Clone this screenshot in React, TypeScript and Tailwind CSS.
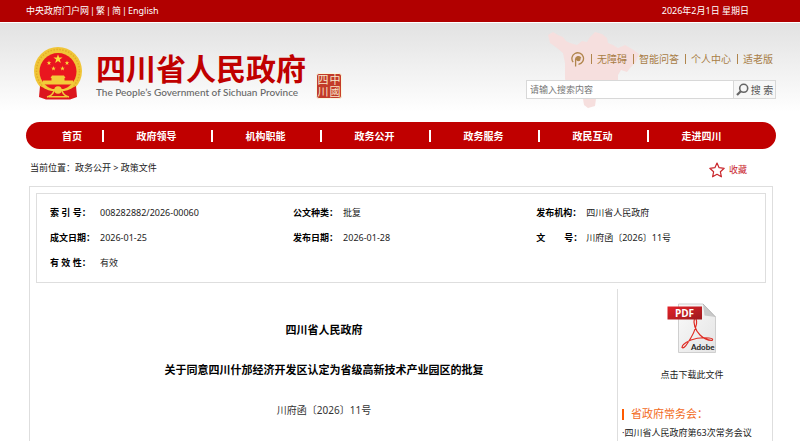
import React from "react";

const navItems = ["首页", "政府领导", "机构职能", "政务公开", "政务服务", "政民互动", "走进四川"];
const tools = ["无障碍", "智能问答", "个人中心", "适老版"];

const facts: { label: string; value: string; spread?: boolean }[] = [
  { label: "索 引 号：", value: "008282882/2026-00060" },
  { label: "公文种类：", value: "批复" },
  { label: "发布机构：", value: "四川省人民政府" },
  { label: "成文日期：", value: "2026-01-25" },
  { label: "发布日期：", value: "2026-01-28" },
  { label: "文 号：", value: "川府函〔2026〕11号", spread: true },
  { label: "有 效 性：", value: "有效" },
];

function Star({ x, y, r }: { x: number; y: number; r: number }) {
  const points = Array.from({ length: 10 }, (_, i) => {
    const radius = i % 2 ? r * 0.4 : r;
    const angle = (Math.PI / 5) * i - Math.PI / 2;
    return `${x + radius * Math.cos(angle)},${y + radius * Math.sin(angle)}`;
  }).join(" ");
  return <polygon points={points} fill="#f9dc3c" />;
}

function Emblem() {
  return (
    <svg viewBox="0 0 48 53" className="h-[53px] w-12 shrink-0" aria-hidden="true">
      <circle cx="24" cy="24" r="24" fill="#f0c537" />
      <circle cx="24" cy="24" r="21.500" fill="none" stroke="#e3ad25" strokeWidth="1.500" strokeDasharray="1.500 1.500" />
      <circle cx="24" cy="24.500" r="18.500" fill="#e9161f" />
      <path d="M6 39L5 50L12 52.500H36L43 50L42 39L36 42H12Z" fill="#dc161d" />
      <Star x={24} y={12} r={4.800} />
      <Star x={15} y={16} r={2.400} />
      <Star x={33} y={16} r={2.400} />
      <Star x={19.500} y={21.500} r={2.400} />
      <Star x={28.500} y={21.500} r={2.400} />
      <path d="M18 28.500h12l1.500 2.500H16.500zM17.500 31h13v3h-13zM9 33.500h30l1 4H8z" fill="#f3cb3a" />
      <path d="M9 38q2 4 9 5h12q7-1 9-5" fill="none" stroke="#f3cb3a" strokeWidth="1.800" />
      <path d="M13 50q5-1 7-6M35 50q-5-1-7-6" fill="none" stroke="#f3cb3a" strokeWidth="1.600" />
      <circle cx="24" cy="43" r="3.800" fill="#f3cb3a" />
      <path d="M15 49h18v1.500H15z" fill="#f3cb3a" />
    </svg>
  );
}

function Seal() {
  return (
    <div className="grid h-[26px] w-[26px] shrink-0 grid-cols-2 content-center rounded-[3px] border border-[#faf6dc] bg-[#c23a2a] text-center text-[11px] leading-[12px] text-[#f8e6c8]">
      <span>四</span>
      <span>中</span>
      <span>川</span>
      <span>國</span>
    </div>
  );
}

function ProvinceMap() {
  return (
    <svg viewBox="0 0 94 78" className="absolute top-2 right-[159px] h-[78px] w-[94px]" aria-hidden="true">
      <path
        d="M1 4L6 1L11 4L16 6L19 10L23 12L30 14L35 10L40 11L43 6L48 1L55 3L60 7L61 12L66 14L71 17L78 14L85 18L92 23L90 28L88 32L83 37L80 41L74 39L71 44L71 50L69 55L62 60L53 64L49 68L48 75L41 77L37 74L36 68L28 63L22 58L18 48L18 32L16 22L10 17L6 14L3 12Z"
        fill="#f6dfde"
      />
    </svg>
  );
}

function Magnifier() {
  return (
    <svg viewBox="0 0 13 13" className="h-[13px] w-[13px]" fill="none" stroke="#666" aria-hidden="true">
      <circle cx="7.700" cy="5.300" r="4" strokeWidth="1.600" />
      <path d="M4.800 8.200L1 12" strokeWidth="2.200" />
    </svg>
  );
}

function VoiceMark() {
  return (
    <svg viewBox="0 0 14 15" className="h-[15px] w-[14px]" fill="none" stroke="#b0854c" strokeWidth="1.300" aria-hidden="true">
      <path d="M2.200 10.200A5.800 5.800 0 1 1 7.500 12.300" />
      <path d="M4.600 14.500V7A2.700 2.700 0 0 1 9.800 6.300" />
      <circle cx="7.300" cy="6.900" r="1.700" fill="#b0854c" />
    </svg>
  );
}

function PdfIcon() {
  return (
    <svg viewBox="0 0 50 51" className="h-[51px] w-[50px]" aria-hidden="true">
      <defs>
        <linearGradient id="sheet" x1="0" y1="0" x2="1" y2="1">
          <stop offset="0" stopColor="#fafafa" />
          <stop offset="1" stopColor="#e4e4e4" />
        </linearGradient>
        <linearGradient id="band" x1="0" y1="0" x2="1" y2="1">
          <stop offset="0" stopColor="#e32228" />
          <stop offset="1" stopColor="#9c1a1e" />
        </linearGradient>
      </defs>
      <path d="M11.500 1H36L48.500 14V49.500H11.500Z" fill="url(#sheet)" stroke="#cfcfcf" />
      <path d="M36 1L37.500 12.500L48.500 14Z" fill="#c9c9c9" />
      <path d="M36 1L48.500 14" stroke="#aaa" strokeWidth="0.600" />
      <path
        d="M27.500 15C26 20 28 27 33 32Q38 37 45 37.500Q47 35.500 42 35Q32 34 24 37Q15 41 15 44.500Q17 46 21 39.500Q28 29 29.500 21Q30 15 27.500 15"
        fill="none"
        stroke="#e02c24"
        strokeWidth="1.200"
      />
      <path d="M0.500 3.500H35V16.500H0.500Z" fill="url(#band)" />
      <text x="17.500" y="13.500" textAnchor="middle" fontSize="10" fontWeight="700" fill="#fff" fontFamily="Open Sans, sans-serif">
        PDF
      </text>
      <text x="47.500" y="47" textAnchor="end" fontSize="8" fontWeight="700" fill="#222" fontFamily="Lato, sans-serif">
        Adobe
      </text>
    </svg>
  );
}

export default function App() {
  return (
    <div className="flex min-h-screen flex-col bg-white font-['Noto_Sans','Noto_Sans_CJK_SC',sans-serif] text-[9px] leading-3 text-[#222]">
      <div className="flex h-[22px] items-center justify-between bg-[#b10000] pr-[51px] pl-[26px] text-white">
        <div className="flex gap-px">
          <a href="#gov">中央政府门户网</a>
          <span>|</span>
          <a href="#traditional">繁</a>
          <span>|</span>
          <a href="#simplified">简</a>
          <span>|</span>
          <a href="#english">English</a>
        </div>
        <span>2026年2月1日 星期日</span>
      </div>

      <header className="relative mt-px flex h-[99px] items-start justify-between bg-linear-to-b from-[#e2e2e2] to-white to-90% pt-6 pr-6 pl-[34px]">
        <a href="#home" className="flex">
          <Emblem />
          <div className="pt-1 pl-[14px]">
            <h1 className="text-[30px] leading-[35px] font-bold text-[#c00000]">四川省人民政府</h1>
            <p className="font-['Lato',sans-serif] text-[10px] leading-3 font-medium text-[#666]">The People’s Government of Sichuan Province</p>
          </div>
          <div className="pt-[26px] pl-[10px]">
            <Seal />
          </div>
        </a>
        <ProvinceMap />
        <div className="relative w-[250px]">
          <nav aria-label="工具" className="flex h-6 items-center justify-end gap-[5px] pr-[3px] text-[10px] text-[#a87d45]">
            <VoiceMark />
            {tools.map((tool) => (
              <React.Fragment key={tool}>
                <span className="ml-px h-[10px] w-px bg-[#b0854c]" />
                <a href="#tool">{tool}</a>
              </React.Fragment>
            ))}
          </nav>
          <form className="mt-[9px] flex h-[19px] border border-[#d8d8d8] bg-white" onSubmit={(e) => e.preventDefault()}>
            <input
              type="search"
              aria-label="搜索内容"
              placeholder="请输入搜索内容"
              className="min-w-0 flex-1 px-[3px] outline-none placeholder:text-[#777]"
            />
            <button type="submit" className="flex w-[42px] items-center justify-center gap-0.5 border-l border-[#d8d8d8] bg-[#f7f7f7] text-[10px] text-[#555]">
              <Magnifier />
              <span>搜 索</span>
            </button>
          </form>
        </div>
      </header>

      <nav
        aria-label="主导航"
        className="mr-6 ml-[26px] grid h-[27px] grid-cols-[60px_repeat(6,1fr)] items-center rounded-full bg-[#c00000] pr-5 pl-4 text-center text-[10px] font-bold text-white"
      >
        {navItems.map((item, i) => (
          <a key={item} href="#section" className={i > 0 ? "border-l-2 border-white pr-0.5" : ""}>
            {item}
          </a>
        ))}
      </nav>

      <div className="flex h-[37px] items-center justify-between pr-[53px] pl-[30px]">
        <p>
          当前位置：<a href="#open">政务公开</a> &gt; <a href="#policy">政策文件</a>
        </p>
        <button type="button" className="flex items-center gap-1 pt-1 text-[#c9252b]">
          <svg viewBox="0 0 16 16" className="h-4 w-4" fill="none" stroke="#c9252b" strokeWidth="1.200" strokeLinejoin="round" aria-hidden="true">
            <path d="M8 1l2.100 4.700 5.100.6-3.800 3.500 1 5L8 12.300 3.600 14.800l1-5L.8 6.300l5.100-.6z" />
          </svg>
          收藏
        </button>
      </div>

      <main className="mr-[27px] ml-[29px] flex flex-1 flex-col border border-b-0 border-[#dedede] px-[6px] pt-[6px]">
        <dl className="grid h-[90px] grid-cols-[34%_34%_32%] content-start border border-[#dedede] pt-[6px] pl-[13px] leading-[25px]">
          {facts.map((fact) => (
            <div key={fact.label} className="flex">
              <dt className={fact.spread ? "flex w-[50px] justify-between pr-1 font-bold text-black" : "w-[50px] font-bold whitespace-nowrap text-black"}>
                {fact.spread ? fact.label.split(" ").map((part) => <span key={part}>{part}</span>) : fact.label}
              </dt>
              <dd>{fact.value}</dd>
            </div>
          ))}
        </dl>

        <div className="mt-[6px] flex flex-1">
          <article className="flex-1 pt-[31px] pr-[5px] text-center text-[11px] leading-5 text-black">
            <h2 className="font-bold">四川省人民政府</h2>
            <h2 className="mt-5 font-bold">关于同意四川什邡经济开发区认定为省级高新技术产业园区的批复</h2>
            <p className="mt-5 text-[10px] text-[#333]">川府函〔2026〕11号</p>
          </article>
          <aside className="w-[149px] border-l border-[#dedede] pt-[14px] pl-1">
            <a href="#pdf" className="flex flex-col items-center gap-[15px] pr-1">
              <PdfIcon />
              <span>点击下载此文件</span>
            </a>
            <h3 className="mt-[25px] flex items-center gap-[7px] text-[11px] leading-4 text-[#f26a1b]">
              <span className="h-[11px] w-0.5 bg-[#ff5a00]" />
              省政府常务会：
            </h3>
            <a href="#meeting" className="mt-[5px] block whitespace-nowrap">
              ·四川省人民政府第63次常务会议
            </a>
          </aside>
        </div>
      </main>
    </div>
  );
}
